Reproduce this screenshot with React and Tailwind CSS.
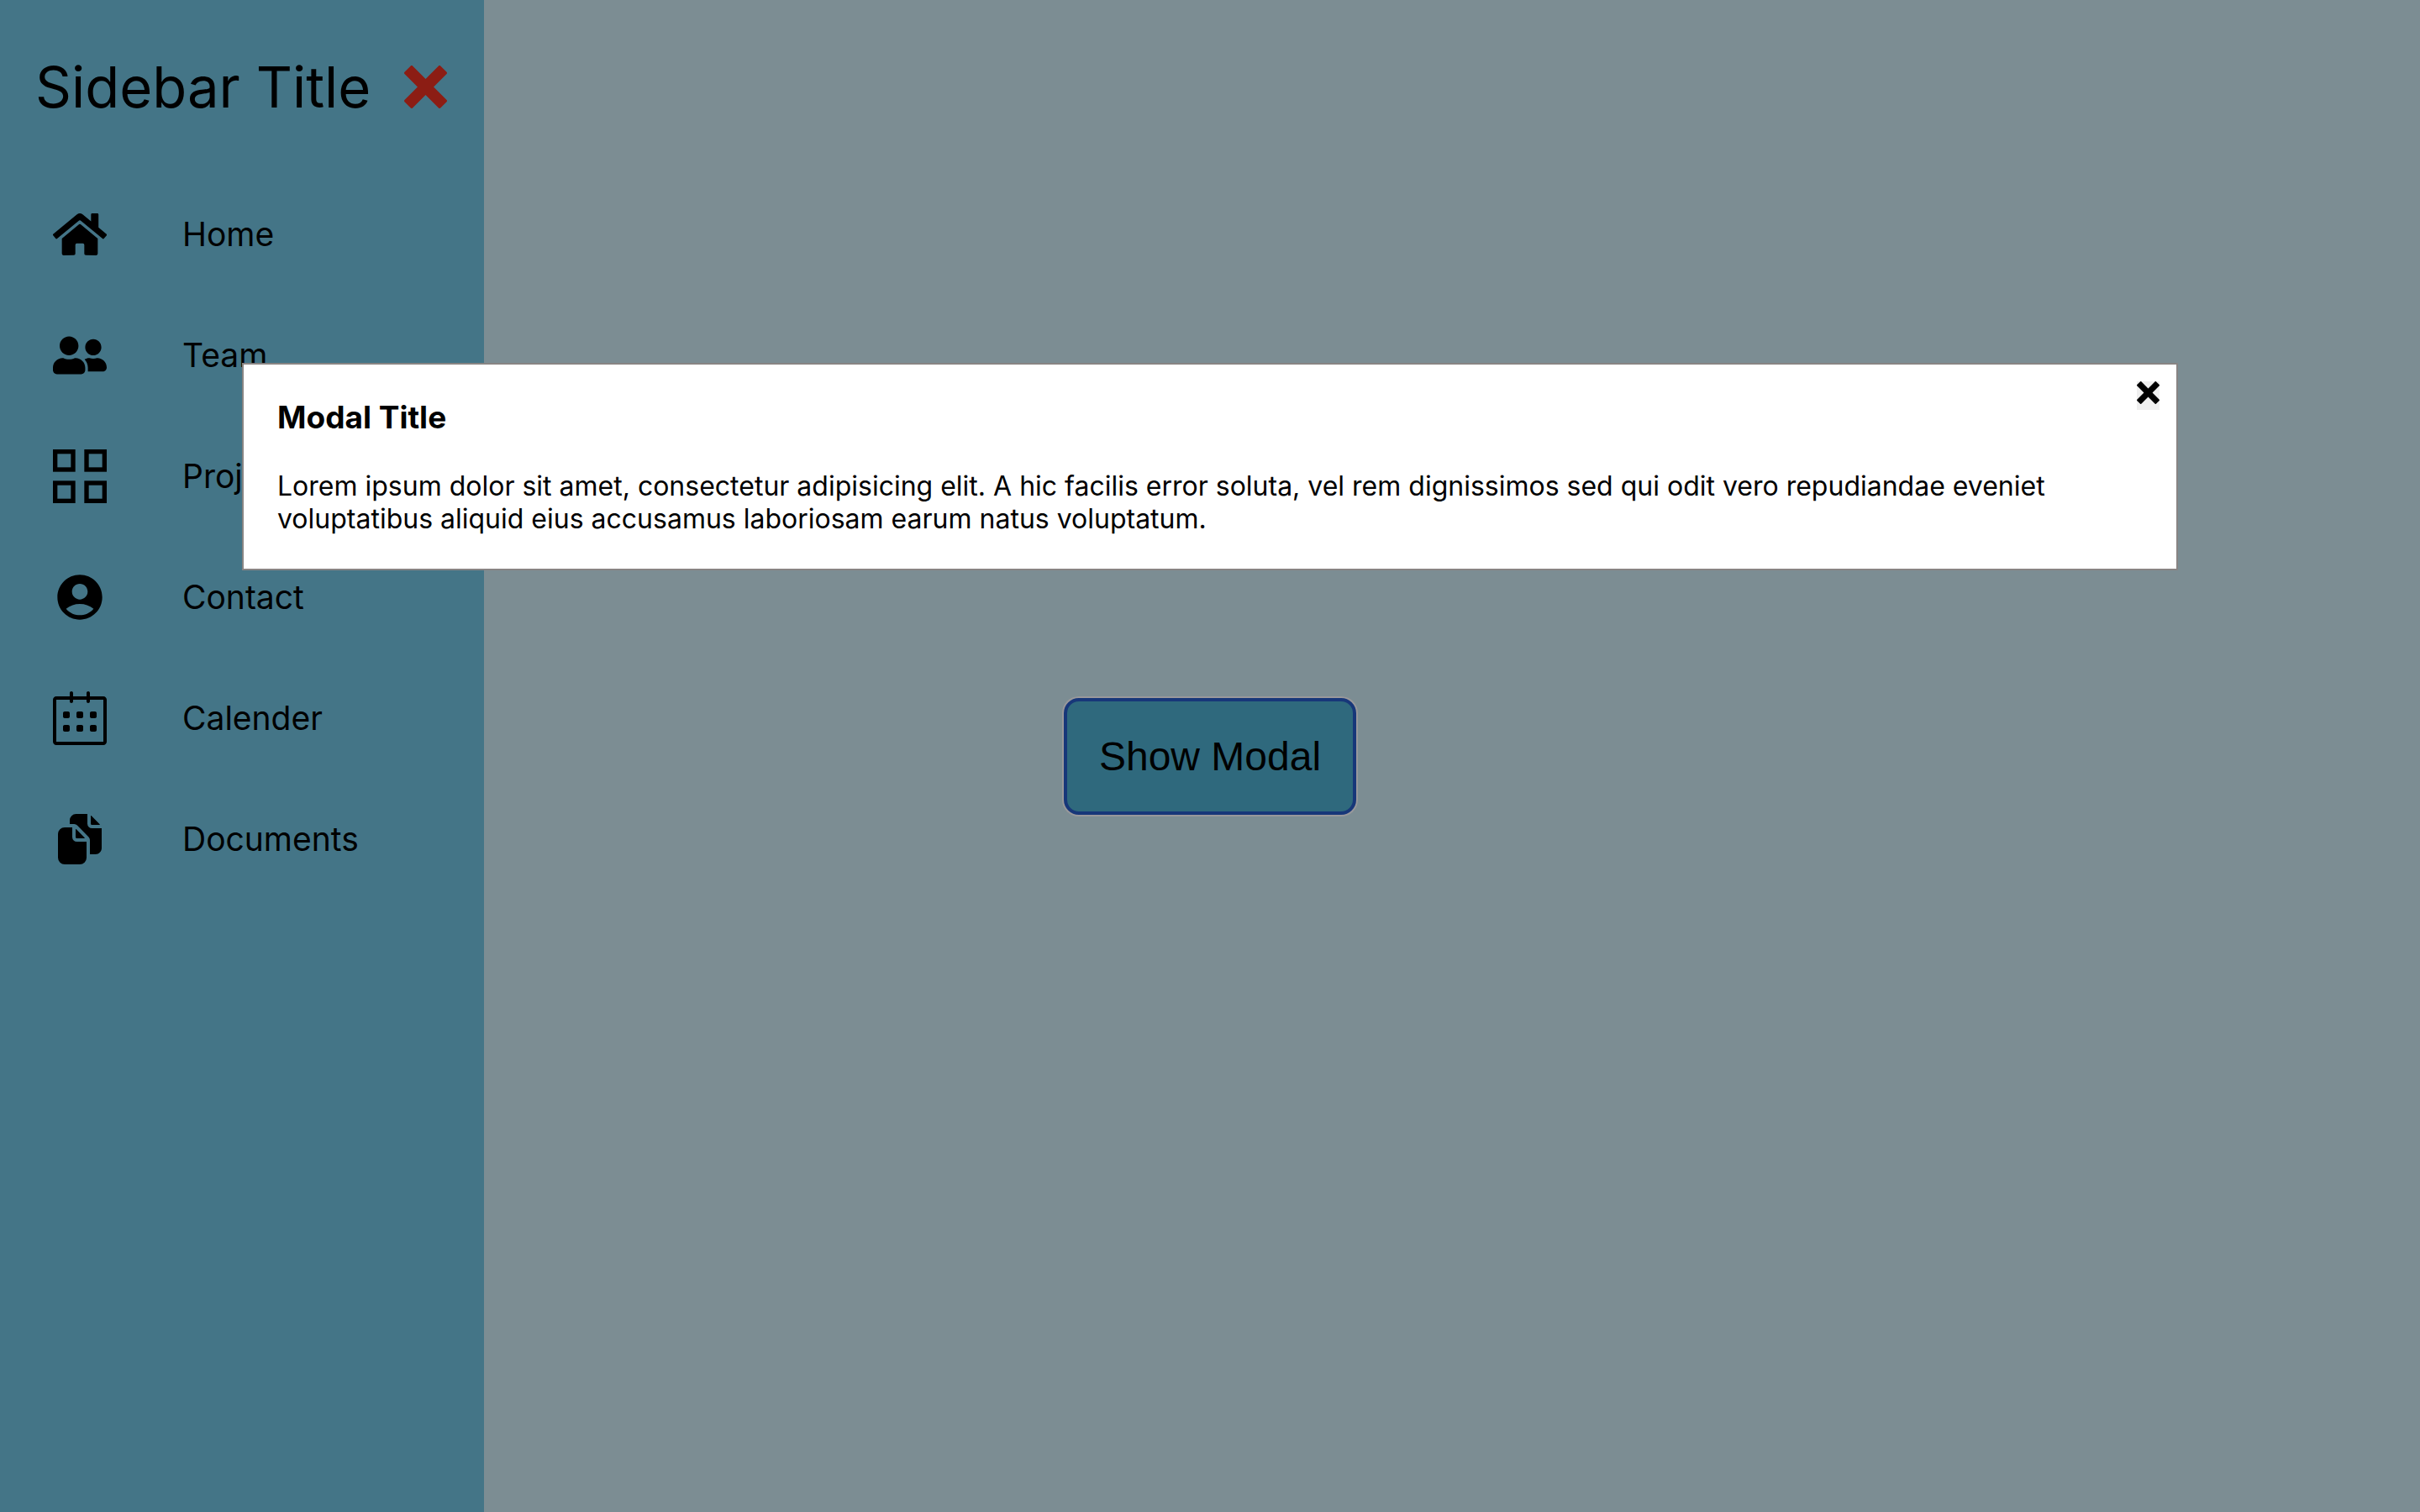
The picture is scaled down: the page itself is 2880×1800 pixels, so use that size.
import { FaHome, FaUserFriends } from "react-icons/fa";
import { MdAccountCircle } from "react-icons/md";
import { IoDocuments } from "react-icons/io5";
import { ImCross } from "react-icons/im";
import { SlCalender } from "react-icons/sl";

function GridIcon({ className }) {
  return (
    <svg className={className} viewBox="0 0 24 24" fill="none" stroke="currentColor" strokeWidth="2" aria-hidden="true">
      <rect x="1" y="1" width="8" height="8" />
      <rect x="15" y="1" width="8" height="8" />
      <rect x="1" y="15" width="8" height="8" />
      <rect x="15" y="15" width="8" height="8" />
    </svg>
  );
}

const links = [
  { label: "Home", Icon: FaHome },
  { label: "Team", Icon: FaUserFriends },
  { label: "Projects", Icon: GridIcon },
  { label: "Contact", Icon: MdAccountCircle },
  { label: "Calender", Icon: SlCalender },
  { label: "Documents", Icon: IoDocuments },
];

function Sidebar() {
  return (
    <aside className="w-1/5 shrink-0 bg-[#447587] pt-14">
      <div className="flex items-center justify-between pr-11 pl-[42px]">
        <h2 className="text-[67px] leading-[95px] whitespace-nowrap">Sidebar Title</h2>
        <button type="button" aria-label="Close sidebar" className="text-[#8c1d14]">
          <ImCross className="size-[51px]" />
        </button>
      </div>
      <nav className="mt-14">
        <ul>
          {links.map(({ label, Icon }) => (
            <li key={label}>
              <a href="#" className="flex h-36 items-center gap-[90px] pl-[63px] text-[39px] leading-[48px]">
                <Icon className="size-16 shrink-0" />
                {label}
              </a>
            </li>
          ))}
        </ul>
      </nav>
    </aside>
  );
}

function Modal() {
  return (
    <div className="fixed inset-x-0 top-[24%] flex justify-center">
      <section
        role="dialog"
        aria-labelledby="modal-title"
        className="relative w-4/5 border-2 border-[#888483] bg-white p-10"
      >
        <h3 id="modal-title" className="mb-10 text-[37px] leading-[45px] font-bold">
          Modal Title
        </h3>
        <p className="pr-20 text-[32px] leading-[39px]">
          Lorem ipsum dolor sit amet, consectetur adipisicing elit. A hic facilis error soluta, vel rem dignissimos sed
          qui odit vero repudiandae eveniet voluptatibus aliquid eius accusamus laboriosam earum natus voluptatum.
        </p>
        <button type="button" aria-label="Close modal" className="absolute top-5 right-5 bg-[#efefef] pb-[7px]">
          <ImCross className="size-[27px]" />
        </button>
      </section>
    </div>
  );
}

export default function App() {
  return (
    <div className="relative flex min-h-screen bg-[#7c8d93] font-['Inter',sans-serif] text-black">
      <Sidebar />
      <main className="pointer-events-none absolute inset-0 flex items-center justify-center">
        <button
          type="button"
          className="pointer-events-auto rounded-[18px] border-4 border-[#173779] bg-[#2f697d] px-[38px] py-10 font-['Liberation_Sans',Arial,sans-serif] text-[48px] leading-[51px] ring-2 ring-[#98989b]"
        >
          Show Modal
        </button>
      </main>
      <Modal />
    </div>
  );
}
